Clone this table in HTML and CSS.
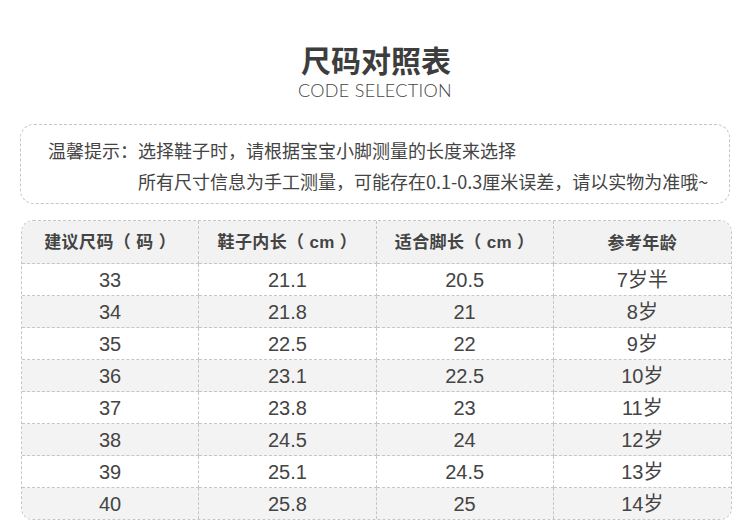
FILE: index.html
```html
<!DOCTYPE html>
<html lang="zh-CN">
<head>
<meta charset="utf-8">
<title>尺码对照表</title>
<link rel="stylesheet" href="styles.css">
</head>
<body>
<div class="page">
  <header class="heading">
    <h1 class="title">尺码对照表</h1>
    <div class="subtitle">CODE SELECTION</div>
  </header>

  <section class="notice">
    <span class="notice-label">温馨提示：</span>
    <div class="notice-lines">
      <p>选择鞋子时，请根据宝宝小脚测量的长度来选择</p>
      <p>所有尺寸信息为手工测量，可能存在0.1-0.3厘米误差，请以实物为准哦~</p>
    </div>
  </section>

  <div class="table-wrap">
    <table class="size-table">
      <thead>
        <tr>
          <th>建议尺码（<span class="unit">码</span>）</th>
          <th>鞋子内长（<span class="unit">cm</span>）</th>
          <th>适合脚长（<span class="unit">cm</span>）</th>
          <th>参考年龄</th>
        </tr>
      </thead>
      <tbody>
        <tr><td>33</td><td>21.1</td><td>20.5</td><td>7岁半</td></tr>
        <tr><td>34</td><td>21.8</td><td>21</td><td>8岁</td></tr>
        <tr><td>35</td><td>22.5</td><td>22</td><td>9岁</td></tr>
        <tr><td>36</td><td>23.1</td><td>22.5</td><td>10岁</td></tr>
        <tr><td>37</td><td>23.8</td><td>23</td><td>11岁</td></tr>
        <tr><td>38</td><td>24.5</td><td>24</td><td>12岁</td></tr>
        <tr><td>39</td><td>25.1</td><td>24.5</td><td>13岁</td></tr>
        <tr><td>40</td><td>25.8</td><td>25</td><td>14岁</td></tr>
      </tbody>
    </table>
  </div>
</div>
</body>
</html>
```

FILE: styles.css
```css
html, body {
  margin: 0;
  padding: 0;
  background: #ffffff;
}

.page {
  width: 750px;
  padding: 42px 0 0;
  box-sizing: border-box;
  color: #444444;
}

.heading {
  display: flex;
  flex-direction: column;
  align-items: center;
}

.title {
  margin: 0 0 0 2px;
  font-family: "Noto Sans CJK SC", sans-serif;
  font-weight: 700;
  font-size: 30px;
  line-height: 34px;
  color: #3d3d3d;
}

.subtitle {
  margin-top: 3px;
  font-family: Lato, "Open Sans", sans-serif;
  font-weight: 300;
  font-size: 18px;
  line-height: 22px;
  color: #444444;
  letter-spacing: 0.3px;
}

.notice {
  margin: 23px 20px 0 20px;
  height: 80px;
  box-sizing: border-box;
  border: 1px dashed #c6c6c6;
  border-radius: 14px;
  padding: 10px 0 0 27px;
  display: flex;
  font-family: "Noto Sans CJK SC", sans-serif;
  font-size: 18px;
  line-height: 31px;
  color: #444444;
}

.notice-label {
  flex: none;
}

.notice-lines p {
  margin: 0;
}

.table-wrap {
  margin: 16px 18px 0 21px;
  border: 1px dashed #c6c6c6;
  border-radius: 12px;
  overflow: hidden;
}

.size-table {
  width: 100%;
  border-collapse: separate;
  border-spacing: 0;
  table-layout: fixed;
}

.size-table th,
.size-table td {
  text-align: center;
  vertical-align: middle;
  padding: 0;
  border-right: 1px dashed #c6c6c6;
  border-bottom: 1px dashed #c6c6c6;
}

.size-table th:last-child,
.size-table td:last-child {
  border-right: none;
}

.size-table tbody tr:last-child td {
  border-bottom: none;
}

.size-table th {
  height: 42px;
  line-height: 22px;
  background: #f2f2f2;
  font-family: "Noto Sans CJK SC", sans-serif;
  font-weight: 700;
  font-size: 17px;
  letter-spacing: 0.4px;
  color: #444444;
}

.unit {
  font-family: "Liberation Sans", "Noto Sans CJK SC", sans-serif;
  padding: 0 5px;
}

.size-table td {
  height: 31px;
  line-height: 24px;
  font-family: "Liberation Sans", "Noto Sans CJK SC", sans-serif;
  font-size: 20px;
  color: #444444;
}

.size-table tbody tr:nth-child(even) td {
  background: #f3f3f3;
}
```
